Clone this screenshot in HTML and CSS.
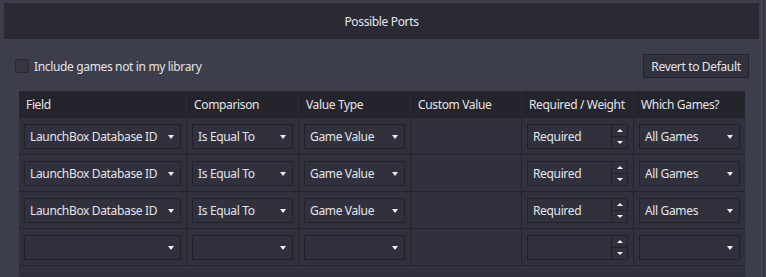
FILE: index.html
```html
<!DOCTYPE html>
<html lang="en">
<head>
  <meta charset="UTF-8">
  <title>Possible Ports</title>
  <link rel="stylesheet" href="styles.css">
</head>
<body>
  <div class="panel">
    <!-- Title Bar -->
    <div class="title-bar">Possible Ports</div>

    <!-- Options -->
    <div class="toolbar">
      <label class="check">
        <span class="check-box"></span>
        <span>Include games not in my library</span>
      </label>
      <button class="btn">Revert to Default</button>
    </div>

    <!-- Rules Grid -->
    <div class="grid">
      <div class="head">Field</div>
      <div class="head">Comparison</div>
      <div class="head">Value Type</div>
      <div class="head">Custom Value</div>
      <div class="head">Required / Weight</div>
      <div class="head">Which Games?</div>

      <div class="cell"><div class="combo"><span>LaunchBox Database ID</span><i class="arrow"></i></div></div>
      <div class="cell"><div class="combo"><span>Is Equal To</span><i class="arrow"></i></div></div>
      <div class="cell"><div class="combo"><span>Game Value</span><i class="arrow"></i></div></div>
      <div class="cell"></div>
      <div class="cell"><div class="spin"><span>Required</span><div class="spin-btns"><i class="up"></i><i class="down"></i></div></div></div>
      <div class="cell"><div class="combo"><span>All Games</span><i class="arrow"></i></div></div>

      <div class="cell"><div class="combo"><span>LaunchBox Database ID</span><i class="arrow"></i></div></div>
      <div class="cell"><div class="combo"><span>Is Equal To</span><i class="arrow"></i></div></div>
      <div class="cell"><div class="combo"><span>Game Value</span><i class="arrow"></i></div></div>
      <div class="cell"></div>
      <div class="cell"><div class="spin"><span>Required</span><div class="spin-btns"><i class="up"></i><i class="down"></i></div></div></div>
      <div class="cell"><div class="combo"><span>All Games</span><i class="arrow"></i></div></div>

      <div class="cell"><div class="combo"><span>LaunchBox Database ID</span><i class="arrow"></i></div></div>
      <div class="cell"><div class="combo"><span>Is Equal To</span><i class="arrow"></i></div></div>
      <div class="cell"><div class="combo"><span>Game Value</span><i class="arrow"></i></div></div>
      <div class="cell"></div>
      <div class="cell"><div class="spin"><span>Required</span><div class="spin-btns"><i class="up"></i><i class="down"></i></div></div></div>
      <div class="cell"><div class="combo"><span>All Games</span><i class="arrow"></i></div></div>

      <div class="cell"><div class="combo"><span></span><i class="arrow"></i></div></div>
      <div class="cell"><div class="combo"><span></span><i class="arrow"></i></div></div>
      <div class="cell"><div class="combo"><span></span><i class="arrow"></i></div></div>
      <div class="cell"></div>
      <div class="cell"><div class="spin"><span></span><div class="spin-btns"><i class="up"></i><i class="down"></i></div></div></div>
      <div class="cell"><div class="combo"><span></span><i class="arrow"></i></div></div>
    </div>
  </div>
</body>
</html>
```

FILE: styles.css
```css
/* Global Styles */
* {
  margin: 0;
  padding: 0;
  box-sizing: border-box;
}

body {
  font-family: 'Noto Sans', sans-serif;
  font-size: 12px;
  letter-spacing: -0.35px;
  color: #e4e4e8;
  background-color: #3a3b47;
  height: 100vh;
  overflow: hidden;
}

/* Panel */
.panel {
  width: 762px;
  height: 100vh;
  background-color: #3d3e4c;
  border-right: 1px solid #4b4c59;
  padding-top: 3px;
}

.title-bar {
  margin: 0 2px 0 4px;
  height: 36px;
  background-color: #2a2a35;
  display: flex;
  align-items: center;
  justify-content: center;
}

/* Toolbar */
.toolbar {
  margin-top: 15px;
  height: 24px;
  padding: 0 12px 0 15px;
  display: flex;
  align-items: center;
  justify-content: space-between;
}

.check {
  display: flex;
  align-items: center;
  gap: 5px;
}

.check-box {
  width: 14px;
  height: 14px;
  background-color: #363743;
  border: 1px solid #2a2a34;
}

.btn {
  font-family: inherit;
  font-size: 12px;
  letter-spacing: inherit;
  color: #e4e4e8;
  background-color: #31323e;
  border: 1px solid #22222b;
  height: 24px;
  width: 106px;
}

/* Grid */
.grid {
  margin: 13px 0 0 19px;
  width: 726px;
  height: 186px;
  overflow: hidden;
  background-color: #30313d;
  display: grid;
  grid-template-columns: 168px 112px 112px 111px 112px 111px;
  grid-auto-rows: 37px;
  grid-template-rows: 27px;
  align-content: start;
}

.head {
  background-color: #24242d;
  border-right: 1px solid #2c2c36;
  padding-left: 7px;
  display: flex;
  align-items: center;
}

.cell {
  border-right: 1px solid #24242d;
  border-bottom: 1px solid #24242d;
  padding: 6px 5px 5px 5px;
}

.cell:nth-child(6n),
.head:nth-child(6n) {
  border-right: none;
}

/* Inputs */
.combo,
.spin {
  height: 25px;
  border: 1px solid #22222b;
  background-color: #30313d;
  display: flex;
  align-items: center;
}

.combo {
  padding: 0 6px 0 5px;
  justify-content: space-between;
}

.spin span {
  flex: 1;
  padding-left: 5px;
}

.arrow {
  width: 0;
  height: 0;
  border-left: 3.5px solid transparent;
  border-right: 3.5px solid transparent;
  border-top: 4px solid #f0f0f0;
}

.spin-btns {
  width: 16px;
  height: 100%;
  border-left: 1px solid #22222b;
  display: flex;
  flex-direction: column;
}

.spin-btns i {
  flex: 1;
  display: flex;
  align-items: center;
  justify-content: center;
}

.spin-btns .up {
  border-bottom: 1px solid #22222b;
}

.spin-btns i::after {
  content: '';
  border-left: 3px solid transparent;
  border-right: 3px solid transparent;
}

.spin-btns .up::after {
  border-bottom: 3px solid #f0f0f0;
}

.spin-btns .down::after {
  border-top: 3px solid #f0f0f0;
}
```
